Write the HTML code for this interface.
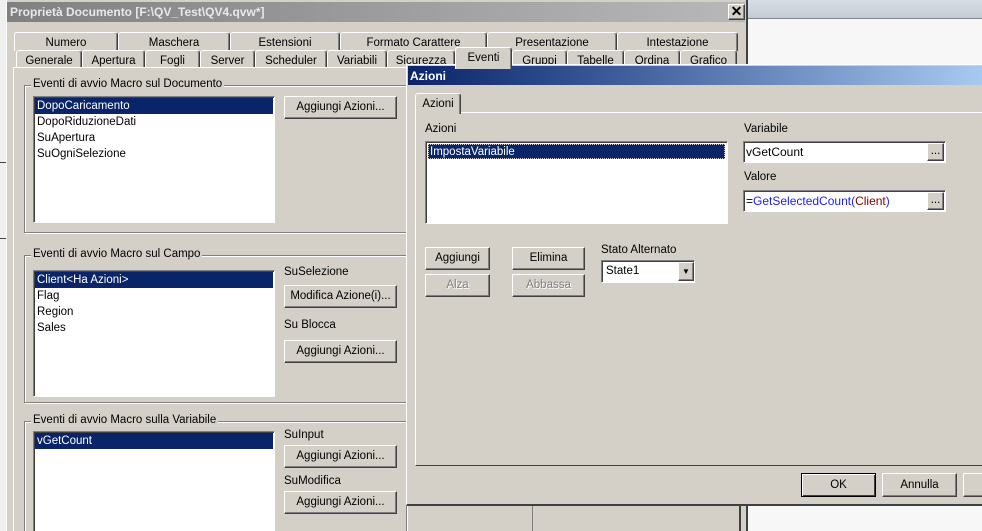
<!DOCTYPE html>
<html style="overflow:hidden;width:982px;height:531px"><head><meta charset="utf-8"><style>
*{box-sizing:border-box;margin:0;padding:0}
body{width:982px;height:531px;overflow:hidden;position:relative;background:#f7f7f7;font-family:"Liberation Sans",sans-serif;font-size:11px;color:#000}
.a{position:absolute}
.face{background:#d4d0c8}
.sunk{border:1px solid;border-color:#808080 #fff #fff #808080;box-shadow:inset 1px 1px 0 #404040;background:#fff}
.btn{position:absolute;background:#d4d0c8;border:1px solid;border-color:#fff #404040 #404040 #fff;box-shadow:inset -1px -1px 0 #808080;text-align:center;line-height:20px;font-size:11.5px}
.tab{position:absolute;background:#d4d0c8;border:1px solid;border-bottom:none;border-color:#fff #404040 #fff #fff;border-radius:3px 3px 0 0;text-align:center;font-size:11.5px;box-shadow:inset -1px 0 0 #808080}
.grp{position:absolute;border:1px solid #808080;box-shadow:1px 1px 0 #fff,inset 1px 1px 0 #fff}
.grp span{position:absolute;top:-8px;left:6px;background:#d4d0c8;padding:0 2px;font-size:11.5px}
.row{height:16px;line-height:17px;padding-left:2px;font-size:11.5px}
.sel{background:#0a246a;color:#fff}
.lbl{position:absolute;font-size:11.5px}
#clip{position:absolute;left:0;top:0;width:982px;height:531px;overflow:hidden}
</style></head><body><div id="clip">
<div class="a" style="left:0;top:0;width:8px;height:531px;background:#f0f0f0"></div>
<div class="a" style="left:0;top:162px;width:6px;height:1px;background:#444"></div>
<div class="a" style="left:0;top:238px;width:6px;height:1px;background:#444"></div>
<div class="a" style="left:748px;top:0;width:234px;height:18px;background:linear-gradient(#d8dee4,#c4ccd4)"></div>
<div class="a" style="left:748px;top:18px;width:234px;height:1px;background:#888"></div>

<div class="a face" style="left:6px;top:0;width:742px;height:531px;border-left:1px solid #fff;border-right:2px solid #404040"></div>
<div class="a" style="left:7px;top:2px;width:738px;height:20px;background:linear-gradient(90deg,#808080,#b8b8b8);color:#e8e8e8;font-weight:bold;font-size:12px;line-height:21px;padding-left:3px">Proprietà Documento [F:\QV_Test\QV4.qvw*]</div>
<div class="btn" style="left:728px;top:4px;width:17px;height:16px;line-height:13px;font-weight:bold;font-size:14px">✕</div>

<div class="tab" style="left:14px;top:32px;width:104px;height:19px;line-height:20px">Numero</div>
<div class="tab" style="left:118px;top:32px;width:112px;height:19px;line-height:20px">Maschera</div>
<div class="tab" style="left:230px;top:32px;width:110px;height:19px;line-height:20px">Estensioni</div>
<div class="tab" style="left:340px;top:32px;width:147px;height:19px;line-height:20px">Formato Carattere</div>
<div class="tab" style="left:487px;top:32px;width:130px;height:19px;line-height:20px">Presentazione</div>
<div class="tab" style="left:617px;top:32px;width:121px;height:19px;line-height:20px">Intestazione</div>
<div class="tab" style="left:16px;top:50px;width:66px;height:18px;line-height:20px">Generale</div>
<div class="tab" style="left:82px;top:50px;width:63px;height:18px;line-height:20px">Apertura</div>
<div class="tab" style="left:145px;top:50px;width:55px;height:18px;line-height:20px">Fogli</div>
<div class="tab" style="left:200px;top:50px;width:55px;height:18px;line-height:20px">Server</div>
<div class="tab" style="left:255px;top:50px;width:72px;height:18px;line-height:20px">Scheduler</div>
<div class="tab" style="left:327px;top:50px;width:60px;height:18px;line-height:20px">Variabili</div>
<div class="tab" style="left:387px;top:50px;width:68px;height:18px;line-height:20px">Sicurezza</div>
<div class="tab" style="left:455px;top:47px;width:57px;height:22px;line-height:20px;z-index:2">Eventi</div>
<div class="tab" style="left:512px;top:50px;width:55px;height:18px;line-height:20px">Gruppi</div>
<div class="tab" style="left:567px;top:50px;width:57px;height:18px;line-height:20px">Tabelle</div>
<div class="tab" style="left:624px;top:50px;width:56px;height:18px;line-height:20px">Ordina</div>
<div class="tab" style="left:680px;top:50px;width:57px;height:18px;line-height:20px">Grafico</div>
<div class="a face" style="left:13px;top:67px;width:727px;height:464px;border-left:1px solid #fff;border-top:1px solid #fff;border-right:1px solid #404040"></div>

<div class="grp" style="left:24px;top:85px;width:383px;height:148px"><span>Eventi di avvio Macro sul Documento</span></div>
<div class="a sunk" style="left:33px;top:96px;width:242px;height:127px;padding:1px">
<div class="row sel">DopoCaricamento</div><div class="row">DopoRiduzioneDati</div><div class="row">SuApertura</div><div class="row">SuOgniSelezione</div></div>
<div class="btn" style="left:284px;top:96px;width:113px;height:23px;line-height:21px">Aggiungi Azioni...</div>

<div class="grp" style="left:24px;top:255px;width:383px;height:148px"><span>Eventi di avvio Macro sul Campo</span></div>
<div class="a sunk" style="left:33px;top:270px;width:242px;height:127px;padding:1px">
<div class="row sel">Client&lt;Ha Azioni&gt;</div><div class="row">Flag</div><div class="row">Region</div><div class="row">Sales</div></div>
<div class="lbl" style="left:284px;top:266px">SuSelezione</div>
<div class="btn" style="left:284px;top:285px;width:113px;height:23px;line-height:21px">Modifica Azione(i)...</div>
<div class="lbl" style="left:284px;top:319px">Su Blocca</div>
<div class="btn" style="left:284px;top:340px;width:113px;height:23px;line-height:21px">Aggiungi Azioni...</div>

<div class="grp" style="left:24px;top:421px;width:383px;height:120px"><span>Eventi di avvio Macro sulla Variabile</span></div>
<div class="a sunk" style="left:33px;top:431px;width:242px;height:110px;padding:1px">
<div class="row sel">vGetCount</div></div>
<div class="lbl" style="left:284px;top:429px">SuInput</div>
<div class="btn" style="left:284px;top:445px;width:113px;height:23px;line-height:21px">Aggiungi Azioni...</div>
<div class="lbl" style="left:284px;top:475px">SuModifica</div>
<div class="btn" style="left:284px;top:491px;width:113px;height:23px;line-height:21px">Aggiungi Azioni...</div>

<div class="a" style="left:532px;top:505px;width:1px;height:26px;background:#808080"></div>
<div class="a" style="left:740px;top:505px;width:1px;height:26px;background:#404040"></div>

<div class="a face" style="left:406px;top:64px;width:590px;height:442px;border-left:1px solid #fff;border-top:1px solid #fff;border-bottom:2px solid #404040"></div>
<div class="a" style="left:408px;top:66px;width:574px;height:19px;background:linear-gradient(90deg,#0a246a,#3a5a98 35%,#a6caf0);color:#fff;font-weight:bold;font-size:12px;line-height:20px;padding-left:2px">Azioni</div>
<div class="a" style="left:415px;top:112px;width:580px;height:354px;border-left:1px solid #fff;border-top:1px solid #fff;border-bottom:1px solid #404040"></div>
<div class="tab" style="left:415px;top:93px;width:46px;height:21px;line-height:20px;z-index:2">Azioni</div>
<div class="lbl" style="left:425px;top:123px">Azioni</div>
<div class="a sunk" style="left:425px;top:141px;width:303px;height:83px;padding:2px 2px">
<div class="row sel" style="height:15px;line-height:16px;outline:1px dotted #ccc;outline-offset:-1px">ImpostaVariabile</div></div>
<div class="lbl" style="left:744px;top:123px">Variabile</div>
<div class="a sunk" style="left:743px;top:141px;width:203px;height:22px;font-size:12px;line-height:20px;padding-left:2px">vGetCount</div>
<div class="btn" style="left:927px;top:143px;width:17px;height:18px;line-height:14px">...</div>
<div class="lbl" style="left:744px;top:171px">Valore</div>
<div class="a sunk" style="left:743px;top:190px;width:203px;height:22px;font-size:12px;line-height:20px;padding-left:2px">=<span style="color:#2020ff">GetSelectedCount(</span><span style="color:#800000">Client</span><span style="color:#2020ff">)</span></div>
<div class="btn" style="left:927px;top:192px;width:17px;height:18px;line-height:14px">...</div>
<div class="btn" style="left:425px;top:247px;width:65px;height:23px;line-height:21px">Aggiungi</div>
<div class="btn" style="left:512px;top:247px;width:73px;height:23px;line-height:21px">Elimina</div>
<div class="btn" style="left:425px;top:274px;width:65px;height:23px;line-height:21px;color:#808080;text-shadow:1px 1px 0 #fff">Alza</div>
<div class="btn" style="left:512px;top:274px;width:73px;height:23px;line-height:21px;color:#808080;text-shadow:1px 1px 0 #fff">Abbassa</div>
<div class="lbl" style="left:601px;top:244px">Stato Alternato</div>
<div class="a sunk" style="left:601px;top:260px;width:94px;height:23px;font-size:11.5px;line-height:21px;padding-left:4px">State1</div>
<div class="btn" style="left:678px;top:262px;width:16px;height:19px;line-height:17px;font-size:8px">▼</div>
<div class="btn" style="left:801px;top:473px;width:75px;height:24px;border:1px solid #000;box-shadow:inset 1px 1px 0 #fff,inset -1px -1px 0 #404040;line-height:22px">OK</div>
<div class="btn" style="left:882px;top:473px;width:75px;height:24px;line-height:22px">Annulla</div>
<div class="btn" style="left:963px;top:473px;width:40px;height:24px"></div>
</div></body></html>
